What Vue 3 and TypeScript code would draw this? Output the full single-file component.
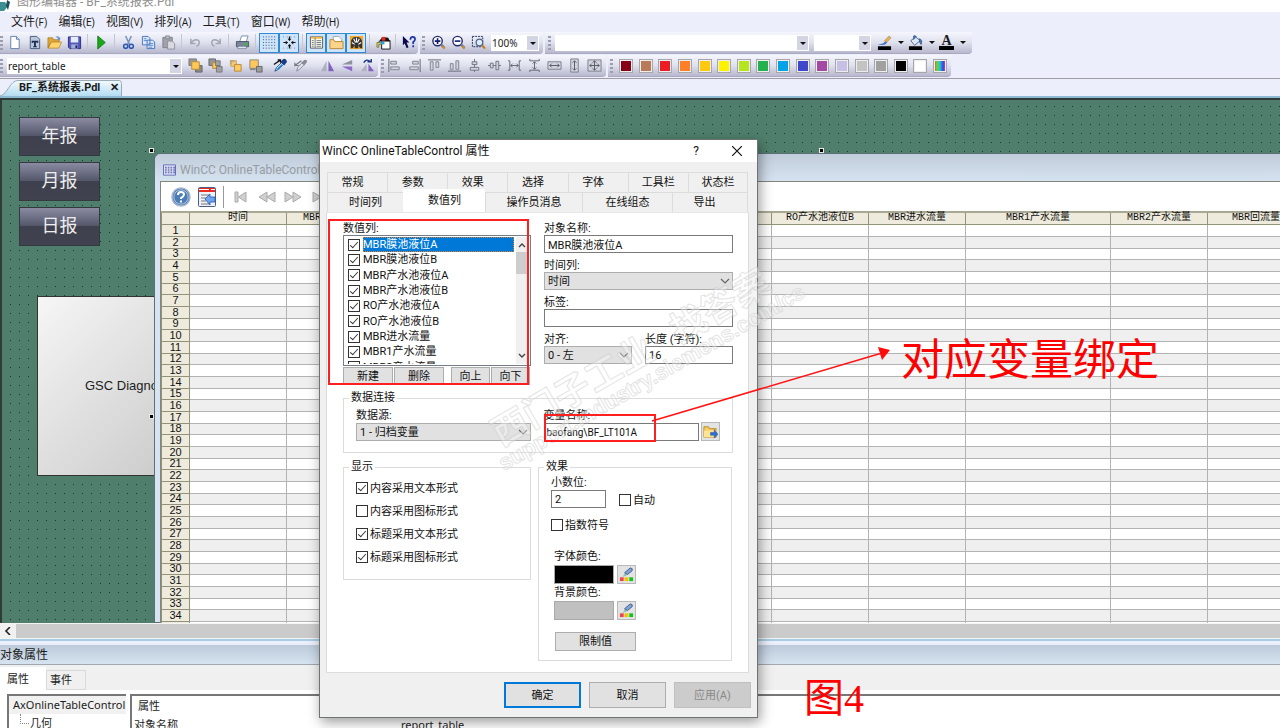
<script setup lang="ts">
import { ref } from 'vue'

const menus: [string, string][] = [
  ['文件', 'F'], ['编辑', 'E'], ['视图', 'V'], ['排列', 'A'], ['工具', 'T'], ['窗口', 'W'], ['帮助', 'H'],
]

const art: Record<string, string> = {
  blank: '<path d="M4 1.5h6l3 3v10H4z" fill="#fff" stroke="#5f7fa8"/><path d="M10 1.5v3h3" fill="#cfe0f4" stroke="#5f7fa8"/>',
  template: '<path d="M3.500 1.500h7l3 3v10h-10z" fill="#b9c8dc" stroke="#44597a"/><path d="M5 6h7v2.500h-1V8H9.500v4h1v1h-4v-1h1V8H6v.500H5z" fill="#1d2f55"/>',
  open: '<path d="M1 3h5l1 2h6v3H4l-3 6z" fill="#e0a637" stroke="#9b6e1b" stroke-width=".7"/><path d="M1.500 14 4.500 7.500H15.500L12.500 14z" fill="#ffd36c" stroke="#a87a22" stroke-width=".7"/><path d="M9 2q3-2 4 1l1-1v3h-3l1-1q-1-2-3-2" fill="#5d8cc9"/>',
  save: '<path d="M1.500 2h13v12.500H3L1.500 13z" fill="#5558bd" stroke="#2c2d7c"/><path d="M4 2h8v6H4z" fill="#e5ecff"/><path d="M4.500 10h7v4.500h-7z" fill="#9fb0d8"/><path d="M9 11h2v3H9z" fill="#22256a"/>',
  play: '<path d="M4 1v14l8-7z" fill="#18a818" stroke="#087008" stroke-width=".8"/>',
  cut: '<path d="M5 1 9 10M11 1 7 10" stroke="#7893b7" stroke-width="1.600" fill="none"/><circle cx="5" cy="12" r="2.200" fill="none" stroke="#2b55b2" stroke-width="1.600"/><circle cx="11" cy="12" r="2.200" fill="none" stroke="#2b55b2" stroke-width="1.600"/>',
  copy: '<path d="M1.500 1.500h6l2 2v7h-8zM6.500 5.500h6l2 2v7h-8z" fill="#dce9ff" stroke="#4673b9"/><path d="M3 4h3M3 6h4M8 9h5M8 11h5M8 13h4" stroke="#5c88cb"/>',
  paste: '<path d="M2 2.500h10v11H2z" fill="#a0a3ab" stroke="#7d8089"/><path d="M5 1h4v3H5z" fill="#c4c6ce" stroke="#85878f"/><path d="M7 6.500h5l2.500 2.500v6H7z" fill="#d8dae0" stroke="#8d909a"/>',
  undo: '<path d="M3 4v5h5M3.500 8.500C6 4 12 4 12 8q0 3-3 4" fill="none" stroke="#a4a7b3" stroke-width="1.600"/>',
  redo: '<path d="M13 4v5H8M12.500 8.500C10 4 4 4 4 8q0 3 3 4" fill="none" stroke="#a4a7b3" stroke-width="1.600"/>',
  print: '<path d="m5 7 2-6h7l-2 6z" fill="#fff" stroke="#7391a8"/><path d="M1.500 7h13v5.500h-13z" fill="#7b8698" stroke="#49566a"/><path d="M3 12h9v2.500H3z" fill="#dfe9ef" stroke="#53647a" stroke-width=".6"/><path d="M11 9h3v2h-3z" fill="#2ac331"/>',
  grid: '<path d="M1 2h15M1 5h15M1 8h15M1 11h15M1 14h15" stroke="#28467a" stroke-dasharray="1 2"/>',
  snap: '<path d="M1 2h15M1 14h15" stroke="#628bbd" stroke-dasharray="1 3"/><path d="M8 1.500v4M8 10.500v4M1.500 8h4M10.500 8h4" stroke="#111" stroke-width="1.300"/><path d="M6 4h4L8 6.500zM6 12h4L8 9.500zM4 6v4l2.500-2zM12 6v4L9.500 8z" fill="#111"/>',
  panels: '<path d="M1.500 2h13v12h-13z" fill="#fffbe7" stroke="#555c68"/><path d="M2 2h12v2H2z" fill="#f1bb50"/><path d="M6.500 3v11M3 6h2M3 8h2M3 10h2M3 12h2M8 6h5M8 8h5M8 10h5M8 12h5" stroke="#6c7588"/>',
  folder: '<path d="M4.500 1.500h6l3 3V10h-9z" fill="#fff" stroke="#a0a5b2"/><path d="M1 5h4l1 2h9v7.500H1z" fill="#fbd38b" stroke="#be8531"/>',
  dyn: '<path d="M1 1h14v14H1z" fill="#f5a82c"/><path d="M2 14V8q0-6 6-6t6 6v6h-2l-2-3v3H6v-3l-2 3z" fill="#343434"/><path d="m3 8 3 2M5 4l2 4M8 3v5M11 4 9 8M13 8l-3 2" stroke="#fff" stroke-width="1.200"/>',
  lib: '<path d="M6 6h9v9H6z" fill="#fff" stroke="#111"/><path d="M2 8 7 2l6 1 2 4H4z" fill="#111"/><path d="M6 2h4v4H6z" fill="#e02c25"/><path d="M1 8h5v2H3v3H1z" fill="#e8d52e" stroke="#222" stroke-width=".5"/><path d="M5 7h4v3H5z" fill="#2e9ede"/>',
  help: '<path d="m2 1 7 7H6l2 5-2 1-2-5-2 2z" fill="#0b0b4c"/><path d="M10 5q0-3 2.500-3T15 4.500q0 1.500-2 3v2M13 11v2" fill="none" stroke="#1b36ac" stroke-width="1.800"/>',
  zoomIn: '<circle cx="7" cy="6.500" r="5" fill="#fff" stroke="#252a68" stroke-width="1.500"/><path d="M4 6.500h6M7 3.500v6" stroke="#111a70" stroke-width="1.700"/><path d="m10.500 10 4 4" stroke="#6a7795" stroke-width="2.500"/><path d="m12 12 2.500 2.500" stroke="#d78c26" stroke-width="2"/>',
  zoomOut: '<circle cx="7" cy="6.500" r="5" fill="#fff" stroke="#252a68" stroke-width="1.500"/><path d="M4 6.500h6" stroke="#111a70" stroke-width="1.700"/><path d="m10.500 10 4 4" stroke="#6a7795" stroke-width="2.500"/><path d="m12 12 2.500 2.500" stroke="#d78c26" stroke-width="2"/>',
  zoomBox: '<path d="M1.500 1.500h11v11h-11z" fill="none" stroke="#222e5d" stroke-dasharray="2 1"/><circle cx="9" cy="8" r="3.500" fill="#dcecff" stroke="#536580" stroke-width="1.300"/><path d="m12 11 3 3.500" stroke="#c57c20" stroke-width="2.200"/>',
  pen: '<path d="M1 10q6 0 8-4l2 2q-3 4-10 2z" fill="#3a72c9"/><path d="m8 6 5-5 2 2-5 5z" fill="#e8b252" stroke="#8d6b34" stroke-width=".5"/><path d="M1 12h14v4H1z" fill="#000"/>',
  bucket: '<path d="m3 6 5-4 5 4-6 5z" fill="#dbe7f5" stroke="#53698b"/><path d="M6 5V1q2-1 3 1M12 4q4 1 2 6-2-1-2-6" fill="#3f76c8" stroke="#46638e"/><path d="M1 12h14v4H1z" fill="#000"/>',
  fore: '<path d="M1 1h8v7H1z" fill="#9a9a9a" stroke="#777"/><path d="M8 8h7v7H8z" fill="#888" stroke="#666"/><path d="M4 4h8v8H4z" fill="#ffc857" stroke="#b78a35"/>',
  forward: '<path d="M1 1h7v7H1z" fill="#959595" stroke="#666"/><path d="M5 5h6v6H5z" fill="#ffc857" stroke="#b78a35"/><path d="M9 9h6v6H9zM8 3h5v5H8z" fill="#a2a2a2" stroke="#777"/>',
  backward: '<path d="M3 3h6v6H3z" fill="#f2c977" stroke="#c6a45b"/><path d="M7 7h7v7H7z" fill="#ffcd63" stroke="#b78a35"/><path d="M2 2h5v2H4v3H2z" fill="#c1a779"/>',
  back: '<path d="M2 2h9v9H2z" fill="#ffc857" stroke="#888"/><path d="M9 9h6v6H9z" fill="#9c9c9c" stroke="#666"/><path d="M2 11h6v2H2z" fill="#888"/>',
  pick: '<path d="m2 14 2-4 5-5 2 2-5 5z" fill="#fff" stroke="#16457f"/><path d="m8 4 4 4 3-4q-1-4-4-3z" fill="#153e86"/><path d="m1 7 7-5M5 2h3v3" fill="none" stroke="#111" stroke-width="1.400"/><path d="m5 12 5-5" stroke="#2c8ad5" stroke-width="2"/>',
  apply: '<path d="m4 14 1-4 5-5 2 2-5 5z" fill="#e5e6ec" stroke="#888b96"/><path d="m9 5 3 3 3-4q0-3-3-2z" fill="#868997"/><path d="M9 3 2 8V5m0 3h4" fill="none" stroke="#777a85" stroke-width="1.300"/>',
  mirrorH: '<path d="M7 3v11H1z" fill="#adb0bd"/><path d="M9 3v11h6z" fill="#8262c1"/>',
  mirrorV: '<path d="M13 7H2l11-5z" fill="#8f929e"/><path d="M13 9H2l11 5z" fill="#8c68c7"/>',
  rotate: '<path d="M7 6v8H1z" fill="#aeb1be"/><path d="m9 6 6 8H9z" fill="#8262c1"/><path d="M4 5q3-5 7-1M8 4h4V1" fill="none" stroke="#17357e" stroke-width="1.500"/>',
  aLeft: '<path d="M2 1v14" stroke="#62646f"/><path d="M4 3.500h6v3H4zM4 9.500h9v3H4z" fill="#d2d4df" stroke="#80828e"/>',
  aRight: '<path d="M14 1v14" stroke="#62646f"/><path d="M6 3.500h6v3H6zM3 9.500h9v3H3z" fill="#d2d4df" stroke="#80828e"/>',
  aTop: '<path d="M1 2h14" stroke="#62646f"/><path d="M3.500 4v9h3V4zM9.500 4v6h3V4z" fill="#d2d4df" stroke="#80828e"/>',
  aBottom: '<path d="M1 14h14" stroke="#62646f"/><path d="M3.500 6v6h3V6zM9.500 3v9h3V3z" fill="#d2d4df" stroke="#80828e"/>',
  cV: '<path d="M8 1v14" stroke="#70727e"/><path d="M5.500 4h5v3h-5zM3.500 10h9v3h-9z" fill="#d2d4df" stroke="#70727e"/>',
  cH: '<path d="M1 8h14" stroke="#70727e"/><path d="M3.500 5.500h3v5h-3zM9.500 3.500h3v9h-3z" fill="#d2d4df" stroke="#70727e"/>',
  spH: '<path d="M1 3h2v10H1M15 3h-2v10h2M4 8h8M6 6 4 8l2 2M10 6l2 2-2 2" fill="none" stroke="#62646f"/>',
  spV: '<path d="M3 1v2h10V1M3 15v-2h10v2M8 4v8M6 6l2-2 2 2M6 10l2 2 2-2" fill="none" stroke="#62646f"/>',
  sW: '<path d="M1 4h14v8H1z" fill="#d2d4df" stroke="#7c7e89"/><path d="M3 8h10M5 6 3 8l2 2M11 6l2 2-2 2" fill="none" stroke="#555762"/>',
  sH: '<path d="M4 1h8v14H4z" fill="#d2d4df" stroke="#7c7e89"/><path d="M8 3v10M6 5l2-2 2 2M6 11l2 2 2-2" fill="none" stroke="#555762"/>',
  sB: '<path d="M1 2h14v12H1z" fill="#d2d4df" stroke="#7c7e89"/><path d="M3 8h10M8 3v10M5 6 3 8l2 2M11 6l2 2-2 2M6 5l2-2 2 2M6 11l2 2 2-2" fill="none" stroke="#555762"/>',
  goto: '<path d="M1 3h5l1 2h7v9H1z" fill="#f6ce62" stroke="#b48527"/><path d="M1 7h14l-2 7H1z" fill="#ffe494"/><path d="M8 9h4V6l4 5-4 4v-3H8z" fill="#2e6fd2" stroke="#1b4a9a" stroke-width=".5"/>',
  color: '<path d="M3 10q2 0 3-4l3 2q-2 3-6 2z" fill="#8dc3b4"/><path d="m6 6 6-5q3 0 2 3L9 8z" fill="#7da3dc" stroke="#455c86"/><path d="M1 11h4v4H1z" fill="#f0454c"/><path d="M6 11h4v4H6z" fill="#f5c400"/><path d="M11 11h4v4h-4z" fill="#10c41c"/>',
}

const fileTools = [
  ['blank', 'template', 'open', 'save'], ['play'], ['cut', 'copy', 'paste'], ['undo', 'redo'], ['print'],
  ['grid', 'snap'], ['panels', 'folder', 'dyn'], ['lib'],
]
const pressed = ['grid', 'snap', 'panels', 'folder', 'dyn']
const alignTools = ['aLeft', 'aRight', 'aTop', 'aBottom', 'cV', 'cH', 'spH', 'spV', 'sW', 'sH', 'sB']
const swatches = [
  '#880015', '#b97a57', '#ed1c24', '#ff7f27', '#ffc90e', '#fff200', '#b5e61d', '#22b14c', '#00a2e8', '#3f48cc',
  '#a349a4', '#c8bfe7', '#c3c3c3', '#a0a0a0', '#000000', '#ffffff',
]

const reports = ['年报', '月报', '日报']
const columns = [
  '时间', 'MBR膜池液位A', 'MBR膜池液位B', 'MBR产水池液位A', 'MBR产水池液位B', 'RO产水池液位A',
  'RO产水池液位B', 'MBR进水流量', 'MBR1产水流量', 'MBR2产水流量', 'MBR回流量',
]

const tabsA = ['常规', '参数', '效果', '选择', '字体', '工具栏', '状态栏']
const tabsB = ['时间列', '数值列', '操作员消息', '在线组态', '导出']
const values = ref([
  'MBR膜池液位A', 'MBR膜池液位B', 'MBR产水池液位A', 'MBR产水池液位B', 'RO产水池液位A', 'RO产水池液位B',
  'MBR进水流量', 'MBR1产水流量', 'MBR2产水流量',
].map((name) => ({ name, on: true })))
const shows = ref([
  { name: '内容采用文本形式', on: true },
  { name: '内容采用图标形式', on: false },
  { name: '标题采用文本形式', on: true },
  { name: '标题采用图标形式', on: true },
])
const objectName = ref('MBR膜池液位A')
const caption = ref('')
const length = ref('16')
const variable = ref('baofang\\BF_LT101A')
const decimals = ref('2')
</script>

<template>
  <div class="app">
    <header class="titlebar">
      <svg class="logo" viewBox="0 0 12 12"><path d="M0 2h5l3 4-4 5H0z" fill="#3b8f93" /><path d="m7 0 3 2-2 8-2-4z" fill="#1d4c5a" /></svg>
      <span>图形编辑器 - BF_系统报表.Pdl</span>
    </header>

    <nav class="menu">
      <a v-for="m in menus" :key="m[1]" href="#">{{ m[0] }}<small>({{ m[1] }})</small></a>
    </nav>

    <div class="toolbars">
      <div class="bar-row">
        <div class="bar files">
          <i class="grip"></i>
          <div v-for="(g, gi) in fileTools" :key="gi" class="group">
            <button v-for="t in g" :key="t" class="tool" :class="{ pressed: pressed.includes(t) }" :aria-label="t">
              <svg viewBox="0 0 16 16" v-html="art[t]"></svg>
            </button>
          </div>
          <button class="tool" aria-label="help"><svg viewBox="0 0 16 16" v-html="art.help"></svg></button>
        </div>
        <div class="bar zooms">
          <i class="grip"></i>
          <button v-for="t in ['zoomIn', 'zoomOut', 'zoomBox']" :key="t" class="tool" :aria-label="t">
            <svg viewBox="0 0 16 16" v-html="art[t]"></svg>
          </button>
          <span class="combo zoom"><select aria-label="缩放"><option>100%</option></select><b></b></span>
        </div>
        <div class="bar fonts">
          <i class="grip"></i>
          <span class="combo family"><select aria-label="字体"><option></option></select><b></b></span>
          <span class="combo size"><select aria-label="字号"><option></option></select><b></b></span>
          <button class="drop" aria-label="线条颜色"><svg viewBox="0 0 16 16" v-html="art.pen"></svg><b></b></button>
          <button class="drop" aria-label="填充颜色"><svg viewBox="0 0 16 16" v-html="art.bucket"></svg><b></b></button>
          <button class="drop"><span class="letter">A</span><b></b></button>
        </div>
      </div>
      <div class="bar-row">
        <div class="bar objects">
          <i class="grip"></i>
          <span class="combo object"><select aria-label="对象"><option>report_table</option></select><b></b></span>
          <div class="group spaced">
            <button v-for="t in ['fore', 'forward', 'backward', 'back']" :key="t" class="tool" :aria-label="t"><svg viewBox="0 0 16 16" v-html="art[t]"></svg></button>
          </div>
          <div class="group">
            <button v-for="t in ['pick', 'apply']" :key="t" class="tool" :aria-label="t"><svg viewBox="0 0 16 16" v-html="art[t]"></svg></button>
          </div>
          <div class="group">
            <button v-for="t in ['mirrorH', 'mirrorV', 'rotate']" :key="t" class="tool" :aria-label="t"><svg viewBox="0 0 16 16" v-html="art[t]"></svg></button>
          </div>
        </div>
        <div class="bar aligns">
          <i class="grip"></i>
          <button v-for="t in alignTools" :key="t" class="tool" :aria-label="t"><svg viewBox="0 0 16 16" v-html="art[t]"></svg></button>
        </div>
        <div class="bar colors">
          <i class="grip"></i>
          <div class="palette">
            <button v-for="c in swatches" :key="c" class="swatch" :style="{ background: c }" :aria-label="c"></button>
            <button class="swatch rainbow" aria-label="more"></button>
          </div>
        </div>
      </div>
    </div>

    <div class="doc-tabs">
      <div class="doc-tab">
        <svg viewBox="0 0 124 16" preserveAspectRatio="none">
          <defs><linearGradient id="tabfill" x2="0" y2="1"><stop offset="0" stop-color="#f2fbff" /><stop offset="1" stop-color="#b4dcf2" /></linearGradient></defs>
          <path d="M0 16C8 14 10 .5 18 .5H120q2.500 0 2.500 3V16" fill="url(#tabfill)" stroke="#9aa9b8" />
        </svg>
        <span>BF_系统报表.Pdl</span><button aria-label="关闭">✕</button>
      </div>
    </div>

    <main class="canvas">
      <svg class="dots"><defs><pattern id="dot" width="9" height="9" patternUnits="userSpaceOnUse"><rect x="8" y="8" width="1" height="1" fill="#17352a" /></pattern></defs><rect width="100%" height="100%" fill="url(#dot)" /></svg>
      <div class="reports"><button v-for="r in reports" :key="r">{{ r }}</button></div>
      <div class="gsc">GSC Diagno</div>

      <section class="control">
        <h2><svg viewBox="0 0 14 12"><path d="M.5.500h13v11H.500z" fill="#eef0ff" stroke="#5b62b5" /><path d="M2 3h11M2 5h11M2 7h11M2 9h11" stroke="#31388c" stroke-dasharray="2 1" /></svg>WinCC OnlineTableControl</h2>
        <div class="sheet">
          <div class="sheet-tools">
            <svg class="q" viewBox="0 0 20 20"><circle cx="10" cy="10" r="9" fill="#3d6da8" stroke="#a5b6cc" stroke-width="1.500" /><circle cx="10" cy="10" r="7.200" fill="#4b7db9" stroke="#d3deed" stroke-width=".8" /><path d="M7 8q0-3 3-3t3 2.500q0 1.500-3 3.500v1M10 13.500v2" fill="none" stroke="#fff" stroke-width="2" /></svg>
            <svg class="cfg" viewBox="0 0 18 20"><rect x=".5" y=".5" width="17" height="19" rx="1" fill="#eef1f7" stroke="#4b5f86" /><path d="M1 1h16v4H1z" fill="#ef2a20" /><path d="M1 2.500h10M13 2.500h4" stroke="#fff" /><path d="M3 8h8M3 11h5M3 14h5M3 17h8" stroke="#777" /><path d="m7 12 5-5v3h5v5h-5v3z" fill="#6ea3ee" stroke="#2555b0" stroke-width=".8" /></svg>
            <i></i>
            <svg class="nav" viewBox="0 0 90 12" fill="#d0d0d0" stroke="#aaa">
              <path d="M1 1h3v10H1zM12 1v10L4.500 6zM33 1v10l-8-5zM41 1v10l-8-5zM51 1v10l8-5zM59 1v10l8-5zM79 1v10l8-5z" />
            </svg>
          </div>
          <table>
            <colgroup><col class="c-no" /><col v-for="(c, i) in columns" :key="c" :class="i === 8 ? 'c-wide' : 'c-val'" /></colgroup>
            <thead><tr><th></th><th v-for="c in columns" :key="c">{{ c }}</th></tr></thead>
            <tbody><tr v-for="n in 35" :key="n"><th>{{ n }}</th><td v-for="c in columns" :key="c"></td></tr></tbody>
          </table>
        </div>
      </section>
      <i class="handle h1"></i><i class="handle h2"></i><i class="handle h3"></i>
    </main>

    <div class="hscroll"><button aria-label="向左"><svg viewBox="0 0 8 8"><path d="M6 0 2 4l4 4" fill="none" stroke="#222" stroke-width="1.600" /></svg></button><div></div></div>

    <section class="props">
      <h2>对象属性</h2>
      <div class="props-tabs"><button class="on">属性</button><button>事件</button></div>
      <div class="props-body">
        <div class="tree"><p class="root">AxOnlineTableControl</p><p class="leaf">几何</p></div>
        <div class="list"><p class="head">属性</p><p class="item"><span>对象名称</span><span>report_table</span></p></div>
      </div>
    </section>

    <section class="dialog">
      <header><span>WinCC OnlineTableControl 属性</span><button>?</button><button aria-label="关闭"><svg viewBox="0 0 10 10"><path d="m0 0 10 10M10 0 0 10" stroke="#111" stroke-width="1.200" /></svg></button></header>
      <div class="tabs-a"><button v-for="t in tabsA" :key="t">{{ t }}</button></div>
      <div class="tabs-b"><button v-for="t in tabsB" :key="t" :class="{ on: t === '数值列' }">{{ t }}</button></div>
      <div class="page">
        <div class="upper">
          <div class="left">
            <p class="lab">数值列:</p>
            <div class="listbox">
              <div class="rows">
                <label v-for="(v, i) in values" :key="v.name" :class="{ sel: i === 0 }"><input v-model="v.on" type="checkbox" /><span>{{ v.name }}</span></label>
              </div>
              <div class="vscroll">
                <svg viewBox="0 0 8 5"><path d="m1 4 3-3 3 3" /></svg><i></i><svg viewBox="0 0 8 5"><path d="m1 1 3 3 3-3" /></svg>
              </div>
            </div>
            <div class="list-btns"><button>新建</button><button>删除</button><button>向上</button><button>向下</button></div>
          </div>
          <div class="right">
            <label class="field wide">对象名称:<input v-model="objectName" type="text" /></label>
            <label class="field wide">时间列:<span class="sel-box"><select><option>时间</option></select><svg viewBox="0 0 8 5"><path d="m0 0 4 4 4-4" /></svg></span></label>
            <label class="field wide">标签:<input v-model="caption" type="text" /></label>
            <label class="field">对齐:<span class="sel-box"><select><option>0 - 左</option></select><svg viewBox="0 0 8 5"><path d="m0 0 4 4 4-4" /></svg></span></label>
            <label class="field">长度 (字符):<input v-model="length" type="text" /></label>
          </div>
        </div>

        <fieldset class="conn">
          <legend>数据连接</legend>
          <label class="field src">数据源:<span class="sel-box"><select><option>1 - 归档变量</option></select><svg viewBox="0 0 8 5"><path d="m0 0 4 4 4-4" /></svg></span></label>
          <label class="field var">变量名称:<input v-model="variable" type="text" /></label>
          <button class="pic" aria-label="浏览"><svg viewBox="0 0 16 16" v-html="art.goto"></svg></button>
        </fieldset>

        <div class="lower">
          <fieldset class="show">
            <legend>显示</legend>
            <label v-for="s in shows" :key="s.name" class="chk"><input v-model="s.on" type="checkbox" />{{ s.name }}</label>
          </fieldset>
          <fieldset class="fx">
            <legend>效果</legend>
            <div class="dec">
              <label class="field">小数位:<input v-model="decimals" type="text" /></label>
              <label class="chk"><input type="checkbox" />自动</label>
            </div>
            <label class="chk exp"><input type="checkbox" />指数符号</label>
            <div class="clr"><p>字体颜色:</p><div><i class="black"></i><button class="pic" aria-label="字体颜色"><svg viewBox="0 0 16 16" v-html="art.color"></svg></button></div></div>
            <div class="clr"><p>背景颜色:</p><div><i></i><button class="pic" aria-label="背景颜色"><svg viewBox="0 0 16 16" v-html="art.color"></svg></button></div></div>
            <button class="limit">限制值</button>
          </fieldset>
        </div>
      </div>
      <footer><button class="ok">确定</button><button>取消</button><button class="off" disabled>应用(A)</button></footer>
    </section>

    <svg class="marks" viewBox="0 0 1280 728">
      <g class="water">
        <text transform="translate(501 447) rotate(-30)">西门子工业<tspan dx="26">找答案</tspan></text>
        <text class="url" transform="translate(504 471) rotate(-30)">support.industry.siemens.com/cs</text>
      </g>
      <rect x="329" y="220" width="199" height="164" fill="none" stroke="#fe2020" stroke-width="2" />
      <rect x="545" y="415" width="110" height="26" fill="none" stroke="#fe2020" stroke-width="2" />
      <path d="M652 421 882 353" stroke="#fe1414" stroke-width="1.500" />
      <path d="m878 347 12 3-8 10z" fill="#fe0a0a" />
    </svg>
    <p class="note n1">对应变量绑定</p>
    <p class="note n2">图4</p>
  </div>
</template>

<style>
body { margin: 0; overflow: hidden; }
</style>

<style scoped>
* { box-sizing: border-box; }
p, h2 { margin: 0; font-weight: 400; }
.app {
  position: relative; display: flex; flex-direction: column; height: 100vh; overflow: hidden; background: #eceffb;
  font: 12px/16px "Noto Sans", "Noto Sans CJK SC", sans-serif; color: #1c1c1c;
}
button, input, select { font: inherit; color: inherit; border-radius: 0; margin: 0; padding: 0; }
button { border: 0; background: none; }
select, input { appearance: none; border: 0; background: #fff; }
svg { display: block; }

.titlebar { display: flex; flex: none; align-items: flex-end; gap: 5px; height: 12px; background: #fff; color: #8f8f8f; overflow: hidden; font: 12px/20px Roboto, "Noto Sans CJK SC", sans-serif; }
.logo { width: 12px; height: 12px; }
.menu { display: flex; flex: none; gap: 11px; height: 20px; padding-left: 11px; align-items: center; }
.menu a { color: #1c1c1c; text-decoration: none; line-height: 16px; }
.menu small { font: 10px/16px Roboto, sans-serif; }

.toolbars { display: flex; flex: none; flex-direction: column; height: 47px; border-bottom: 1px solid #9d9da3; }
.bar-row { display: flex; gap: 2px; height: 23px; }
.bar { display: flex; align-items: center; height: 22px; border-radius: 0 0 4px 0; border-bottom: 1px solid #a9a9bf; background: linear-gradient(#f5f6fd, #dfe1ee 50%, #b7b8ce); }
.grip { flex: none; width: 3px; height: 14px; background: repeating-linear-gradient(#9c9eaf 0 2px, transparent 2px 4px); }
.group { display: flex; }
.tool { display: flex; flex: none; align-items: center; justify-content: center; width: 20px; height: 20px; }
.tool svg { width: 15px; height: 15px; }
.pressed { border: 1px solid #2f8ad8; background: #cfe4f8; }
.files { width: 418px; }
.files .grip { margin-right: 1px; }
.files .group { padding-right: 3px; margin-right: 3px; border-right: 1px solid #c5c6d4; height: 18px; align-items: center; }
.files .group:nth-last-child(2) { padding-right: 2px; margin-right: 2px; }
.zooms { width: 123px; padding-left: 2px; }
.zooms .grip { margin-right: 3px; }
.fonts { width: 427px; padding-left: 3px; }
.fonts .grip { margin-right: 4px; }
.combo { position: relative; display: block; flex: none; height: 16px; background: #fff; }
.combo select { display: block; width: 100%; height: 16px; font: 10px/16px "Noto Sans", sans-serif; padding-left: 1px; }
.combo b { position: absolute; right: 1px; top: 1px; width: 11px; height: 14px; background: #d3d5e4; pointer-events: none; }
.combo b::after, .drop b { content: ""; border: 3px solid transparent; border-top-color: #111; border-bottom: 0; }
.combo b::after { position: absolute; left: 3px; top: 6px; }
.zoom { width: 48px; margin-left: 3px; }
.family { width: 254px; }
.size { width: 57px; margin-left: 5px; }
.drop { display: flex; align-items: center; gap: 6px; margin-left: 6px; width: 25px; height: 18px; }
.drop svg, .letter { flex: none; width: 15px; height: 15px; }
.letter { border-bottom: 4px solid #000; font: bold 14px/11px "Liberation Serif", serif; }
.objects { width: 378px; }
.object { width: 175px; margin: 0 3px 0 4px; }
.spaced { margin-right: 5px; }
.objects .group + .group { margin-right: 7px; }
.aligns { width: 226px; padding: 0 1px; justify-content: space-between; }
.colors { width: 343px; padding-left: 2px; }
.palette { display: flex; flex: 1; justify-content: space-between; padding: 0 4px 0 6px; }
.swatch { width: 14px; height: 14px; border: 1px solid #a7a7ab; box-shadow: inset 0 0 0 1px #eee; }
.rainbow { background: linear-gradient(90deg, #e5482e, #6dd23a, #22c5ce, #3c44dc, #e23bcb); }

.doc-tabs { display: flex; flex: none; align-items: flex-end; height: 19px; border-bottom: 2px solid #8fb9d3; }
.doc-tab { position: relative; display: flex; align-items: center; width: 123px; height: 16px; padding-left: 19px; font: bold 11px/16px Roboto, "Noto Sans CJK SC", sans-serif; }
.doc-tab svg { position: absolute; left: 0; top: 0; width: 100%; height: 100%; }
.doc-tab span, .doc-tab button { position: relative; }
.doc-tab button { margin-left: auto; padding-right: 4px; }

.canvas { position: relative; flex: none; height: 525px; overflow: hidden; background: #4f7f6c; border-top: 2px solid #303a38; border-left: 2px solid #303a38; }
.dots { position: absolute; left: 0; top: -2px; width: 100%; height: 100%; }
.reports { position: absolute; left: 17px; top: 17px; display: flex; flex-direction: column; gap: 6px; }
.reports button { width: 81px; height: 39px; padding-bottom: 3px; border: 1px solid #35383f; color: #eee; font-size: 18px; background: linear-gradient(#8a8ba2, #54576a 48%, #3e414d 50%, #40434f); }
.gsc { position: absolute; left: 35px; top: 196px; width: 140px; height: 180px; padding-left: 47px; border: 1px solid #333; background: linear-gradient(135deg, #f6f6f6, #cacaca); font: 13px/178px "Liberation Sans", sans-serif; }
.control { position: absolute; left: 152px; right: 0; top: 53px; bottom: 0; padding-left: 5px; border: 1px solid #5d6f78; border-right: 0; border-radius: 6px 0 0 0; background: linear-gradient(#c0ccda, #d6e3f1 28px); }
.control h2 { display: flex; align-items: center; gap: 4px; height: 27px; padding: 5px 0 0 3px; font: 12px/16px Roboto, sans-serif; color: #979ca3; }
.control h2 svg { width: 13px; height: 12px; }
.sheet { border-top: 1px solid #85857a; border-left: 1px solid #85857a; background: #fff; }
.sheet-tools { display: flex; align-items: center; height: 29px; padding-left: 10px; }
.q { width: 20px; height: 20px; }
.cfg { width: 18px; height: 20px; margin-left: 7px; }
.sheet-tools i { width: 1px; height: 22px; margin: 0 10px 0 7px; background: #999; }
.nav { width: 90px; height: 12px; }
table { table-layout: fixed; width: 1143px; border-collapse: collapse; }
.c-no { width: 28px; }
.c-val { width: 97px; }
.c-wide { width: 145px; }
th, td { height: 12px; padding: 0; border: 1px solid #b3b3b3; line-height: 10px; }
tbody tr:nth-child(3n) > * { height: 11px; line-height: 9px; }
th { border-color: #93937c; background: #eeebdd; font: 11px/10px "Liberation Sans", sans-serif; color: #111; }
thead th { height: 12px; white-space: nowrap; font: 10px/10px "Liberation Mono", "Noto Sans CJK SC", monospace; border-top: 2px solid #a8a894; }
tbody tr:nth-child(even) td { background: #efefef; }
.handle { position: absolute; width: 5px; height: 5px; background: #000; border: 1px solid #e8e8e8; }
.h1 { left: 147px; top: 48px; }
.h2 { left: 817px; top: 48px; }
.h3 { left: 147px; top: 314px; }

.hscroll { display: flex; flex: none; height: 16px; border-top: 1px solid #f4f4f4; border-bottom: 1px solid #f4f4f4; background: #cbcbcb; }
.hscroll button { display: grid; place-items: center; width: 16px; background: #f1f1f1; }
.hscroll svg { width: 8px; height: 8px; }

.props { flex: 1; display: flex; flex-direction: column; min-height: 0; border-top: 2px solid #a7cce3; background: #f0f0f0; }
.props h2 { flex: none; height: 24px; padding-top: 1px; border-top: 4px solid #eceffb; border-bottom: 1px solid #a3a7ae; font-size: 12px; line-height: 18px; background: linear-gradient(#bccad9, #d6e3f1); }
.props-tabs { display: flex; flex: none; align-items: flex-end; height: 25px; }
.props-tabs button { width: 40px; height: 20px; border: 1px solid #d9d9d9; padding-right: 10px; font-size: 11px; }
.props-tabs .on { width: 46px; height: 23px; border: 0; background: #fff; }
.props-body { display: flex; flex: 1; gap: 4px; padding: 4px 0 0 7px; background: #fff; }
.tree { width: 119px; overflow: hidden; border-top: 2px solid #777; border-left: 2px solid #777; }
.list { flex: 1; border-top: 2px solid #777; border-left: 2px solid #777; }
.root { padding-left: 4px; font-size: 11px; line-height: 18px; background: #f1f1f1; }
.leaf { position: relative; padding-left: 21px; font-size: 11px; line-height: 18px; }
.leaf::before { content: ""; position: absolute; left: 11px; top: 0; width: 8px; height: 9px; border-left: 1px dotted #888; border-bottom: 1px dotted #888; }
.head { padding-left: 6px; font-size: 11px; line-height: 20px; }
.item { display: flex; padding-left: 2px; font-size: 11px; line-height: 18px; }
.item span:first-child { width: 267px; }

.dialog {
  position: absolute; left: 319px; top: 139px; display: flex; flex-direction: column; width: 439px; padding-bottom: 9px;
  border: 1px solid #6d7471; background: #f0f0f0; box-shadow: 2px 4px 12px rgba(0, 0, 0, .4);
  font: 11px/13px Roboto, "Noto Sans CJK SC", sans-serif; color: #111;
}
.dialog header { display: flex; align-items: center; height: 22px; padding: 0 15px 0 2px; background: #fff; font: 12px/22px Roboto, "Noto Sans CJK SC", sans-serif; }
.dialog header span { flex: 1; }
.dialog header button { width: 10px; margin-left: 31px; }
.dialog header svg { width: 10px; height: 10px; }
.tabs-a, .tabs-b { display: grid; margin: 0 9px 0 7px; }
.tabs-a { grid-template-columns: repeat(7, 1fr); margin-top: 10px; }
.tabs-a button { height: 20px; padding-right: 10px; border: 1px solid #dcdcdc; border-width: 1px 0 0 1px; }
.tabs-a button:nth-child(n+6) { padding-right: 0; }
.tabs-a button:last-child { border-right-width: 1px; }
.tabs-b { grid-template: 20px / 76fr 82fr 97fr 90fr 76fr; align-items: end; }
.tabs-b button { height: 20px; border: 1px solid #dcdcdc; border-width: 1px 0 0 1px; }
.tabs-b button:last-child { padding-right: 11px; border-right-width: 1px; }
.tabs-b .on { height: 23px; border-color: #fff; background: #fff; padding-bottom: 2px; }
.page { margin: 0 8px 0 6px; padding: 9px 15px 11px 16px; border: 1px solid #dcdcdc; border-top-color: #e6e6e6; background: #fff; }
.upper { display: flex; gap: 13px; }
.left { width: 188px; }
.lab, .field { line-height: 13px; }
.listbox { display: flex; justify-content: space-between; height: 131px; padding: 1px 2px; border: 1px solid #777d86; overflow: hidden; }
.rows { width: 168px; overflow: hidden; }
.rows label { display: flex; align-items: center; gap: 3px; height: 15px; padding-left: 2px; }
.rows label:nth-child(3n) { height: 16px; }
.rows label span { flex: 1; line-height: 15px; }
.sel span { background: #0078d7; color: #fff; outline: 1px dotted #d58130; outline-offset: -1px; }
input[type="checkbox"] { position: relative; flex: none; width: 12px; height: 12px; border: 1px solid #333; background: #fff; }
input[type="checkbox"]:checked::after { content: ""; position: absolute; left: 3px; top: 0; width: 3px; height: 7px; border: solid #333; border-width: 0 1px 1px 0; transform: rotate(42deg); }
.vscroll { display: flex; flex-direction: column; width: 12px; padding: 6px 0; background: #f0f0f0; }
.vscroll svg { width: 8px; height: 5px; margin: 0 2px; overflow: visible; }
.vscroll path, .sel-box path { fill: none; stroke: #444; stroke-width: 1.400; }
.sel-box path { stroke: #666; stroke-width: 1.200; }
.vscroll i { height: 22px; margin: 4px 0 auto; background: #cdcdcd; }
.list-btns { display: flex; gap: 1px; margin-top: 1px; }
.list-btns button { width: 50px; height: 18px; border: 1px solid #adadad; background: #e1e1e1; }
.list-btns button:nth-child(n+3) { width: 39px; }
.list-btns button:nth-child(3) { margin-left: 6px; }
.right { display: flex; flex-wrap: wrap; align-content: flex-start; justify-content: space-between; width: 189px; row-gap: 6px; }
.field { display: block; width: 88px; }
.wide { width: 100%; }
.field input { display: block; width: 100%; height: 18px; padding: 0 3px; border: 1px solid #7a7a7a; }
.sel-box { position: relative; display: block; }
.sel-box select { display: block; width: 100%; height: 18px; padding: 0 3px; border: 1px solid #adadad; background: #e1e1e1; }
.sel-box svg { position: absolute; right: 4px; top: 7px; width: 8px; height: 5px; overflow: visible; pointer-events: none; }
fieldset { min-width: 0; margin: 0; border: 1px solid #dcdcdc; padding: 0; }
legend { margin-left: 5px; padding: 0 2px; line-height: 14px; }
.conn { display: flex; align-items: flex-end; height: 62px; margin-top: 6px; padding: 0 12px 11px; }
.conn legend { margin-left: -7px; }
.conn .field { line-height: 15px; }
.src { width: 175px; margin-right: 13px; }
.var { width: 156px; margin-right: 2px; }
.conn .var input { font-size: 10px; padding: 0 2px; }
.pic { display: grid; place-items: center; width: 19px; height: 19px; border: 1px solid #b8b8b8; background: #e3e3e3; }
.pic svg { width: 15px; height: 15px; }
.lower { display: flex; gap: 7px; align-items: flex-start; margin-top: 7px; }
.show { width: 188px; height: 120px; padding: 6px 12px; }
.show legend { margin-left: -7px; }
.chk { display: flex; align-items: center; gap: 2px; height: 16px; }
.show .chk + .chk { margin-top: 7px; }
.fx { width: 194px; height: 201px; padding: 1px 12px; }
.fx legend { margin-left: -7px; }
.dec { display: flex; align-items: flex-end; gap: 13px; }
.dec .field { width: 55px; line-height: 15px; }
.exp { margin: 9px 0 16px; }
.clr { margin: 0 0 1px 3px; line-height: 16px; }
.clr div { display: flex; gap: 3px; }
.clr i { width: 60px; height: 19px; background: #c0c0c0; border: 1px solid #aaa; }
.clr .black { background: #000; }
.limit { display: block; width: 81px; height: 19px; margin: 12px 0 0 4px; border: 1px solid #adadad; background: #e1e1e1; }
.dialog footer { display: flex; justify-content: flex-end; gap: 8px; margin-top: 9px; padding-right: 6px; }
footer button { width: 77px; height: 26px; border: 1px solid #adadad; background: #e1e1e1; }
footer .ok { border: 2px solid #0078d7; }
footer .off { background: #ccc; color: #888; border-color: #bfbfbf; }

.marks { position: absolute; left: 0; top: 0; width: 1280px; height: 728px; pointer-events: none; }
.water text { font: bold 36px "Noto Sans CJK SC", sans-serif; fill: rgba(255, 255, 255, .35); stroke: #c8c8c8; stroke-opacity: .5; stroke-width: 1; }
.water .url { font: bold 22px "Liberation Sans", sans-serif; }
.note { position: absolute; color: #f00; font: 43px/50px "Liberation Serif", "Noto Sans CJK SC", serif; }
.n1 { left: 901px; top: 336px; }
.n2 { left: 804px; top: 674px; font-size: 40px; }
</style>
